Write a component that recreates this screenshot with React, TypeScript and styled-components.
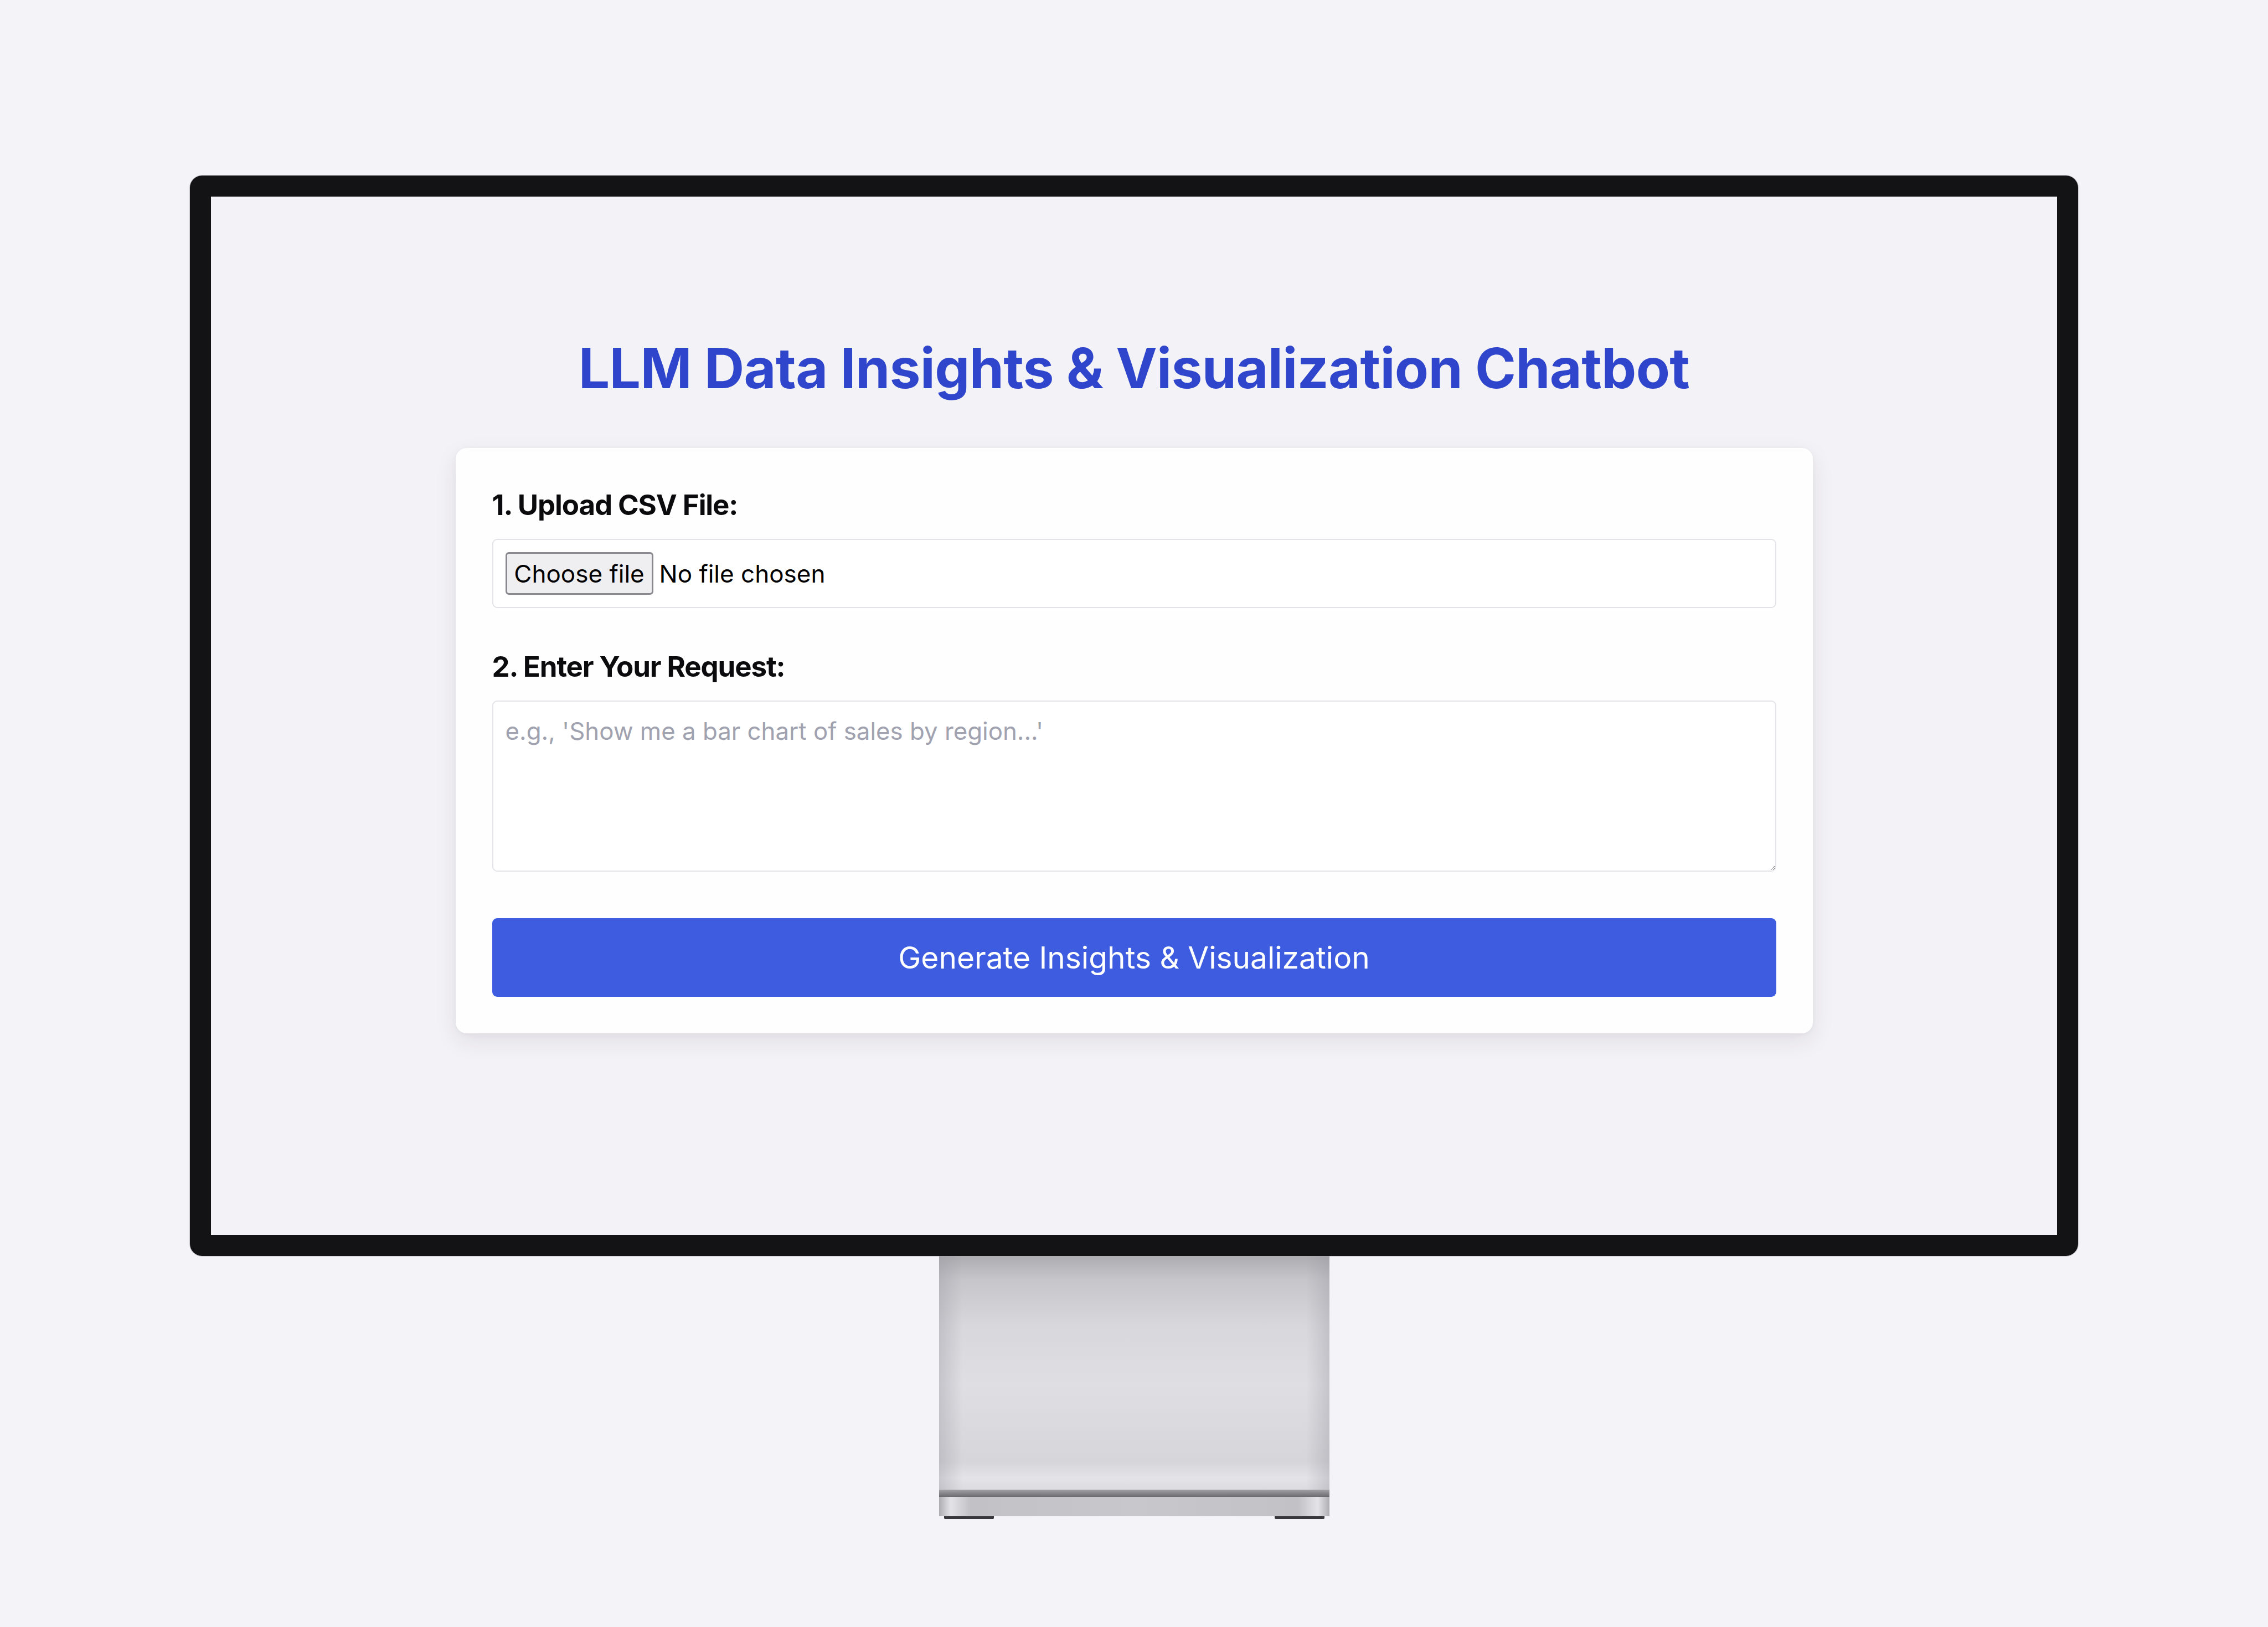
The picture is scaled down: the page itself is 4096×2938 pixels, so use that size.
import React from "react";
import styled, { createGlobalStyle } from "styled-components";

const GlobalStyle = createGlobalStyle`
  * {
    box-sizing: border-box;
  }
  body {
    margin: 0;
    background: #f4f3f7;
    font-family: Inter, "Noto Sans", "Liberation Sans", sans-serif;
  }
`;

const Page = styled.div`
  min-height: 2938px;
  padding-top: 317px;
  display: flex;
  flex-direction: column;
  align-items: center;
`;

const Monitor = styled.div`
  display: flex;
  flex-direction: column;
  align-items: center;
`;

const Bezel = styled.div`
  width: 3410px;
  height: 1951px;
  border: 38px solid #131215;
  border-radius: 22px;
  background: #f3f2f6;
  box-shadow: 0 0 0 1px rgba(120, 118, 128, 0.35);
  overflow: hidden;
`;

const Screen = styled.main`
  height: 100%;
  padding-top: 250px;
  display: flex;
  flex-direction: column;
  align-items: center;
`;

const Title = styled.h1`
  margin: 0 0 84px;
  font-size: 100px;
  line-height: 120px;
  font-weight: 700;
  color: #2f46cc;
  letter-spacing: -0.7px;
`;

const Card = styled.form`
  width: 2451px;
  padding: 66px;
  background: #fefefe;
  border-radius: 20px;
  box-shadow: 0 14px 40px rgba(40, 38, 60, 0.09), 0 2px 8px rgba(40, 38, 60, 0.04);
  display: flex;
  flex-direction: column;
`;

const Field = styled.div<{ $gap?: number }>`
  display: flex;
  flex-direction: column;
  margin-bottom: ${(p) => p.$gap ?? 0}px;
`;

const Label = styled.label`
  display: block;
  margin-bottom: 24px;
  font-size: 51px;
  line-height: 74px;
  font-weight: 700;
  color: #0b0b0d;
  letter-spacing: -1.1px;
`;

const FileBox = styled.label`
  display: flex;
  align-items: center;
  padding: 22px;
  border: 2px solid #e4e3e8;
  border-radius: 9px;
  background: #fff;
  cursor: pointer;

  input {
    display: none;
  }
`;

const FileButton = styled.span`
  display: flex;
  align-items: center;
  justify-content: center;
  width: 267px;
  height: 77px;
  border: 3px solid #8a898f;
  border-radius: 6px;
  background: #efeef1;
  font-size: 44px;
  color: #000;
`;

const FileName = styled.span`
  margin-left: 11px;
  font-size: 44px;
  color: #000;
`;

const Request = styled.textarea`
  width: 100%;
  height: 309px;
  padding: 22px;
  border: 2px solid #e4e3e8;
  border-radius: 9px;
  background: #fff;
  font-family: inherit;
  font-size: 43.8px;
  line-height: 1.45;
  color: #111;
  resize: vertical;
  outline: none;

  &::placeholder {
    color: #a0a2b0;
  }
`;

const SubmitButton = styled.button`
  width: 100%;
  height: 142px;
  border: none;
  border-radius: 9px;
  background: #3d5ce0;
  color: #fff;
  font-family: inherit;
  font-size: 55px;
  font-weight: 400;
  cursor: pointer;
`;

// aluminium stand under the display
const Stand = styled.div`
  width: 705px;
  display: flex;
  flex-direction: column;
`;

const Neck = styled.div`
  height: 422px;
  background:
    linear-gradient(
      90deg,
      rgba(150, 149, 155, 0.35) 0%,
      rgba(150, 149, 155, 0) 6%,
      rgba(150, 149, 155, 0) 94%,
      rgba(150, 149, 155, 0.35) 100%
    ),
    linear-gradient(
      180deg,
      #adacb1 0%,
      #c6c5ca 10%,
      #d8d7dc 30%,
      #dfdee3 55%,
      #d6d5da 88%,
      #e4e3e8 95%,
      #dcdbe0 100%
    );
`;

const Lip = styled.div`
  height: 13px;
  background: linear-gradient(180deg, #a3a2a7 0%, #6b6a6f 100%);
`;

const Base = styled.div`
  height: 35px;
  background: linear-gradient(
    90deg,
    #aeadb2 0%,
    #e4e3e8 3%,
    #c2c1c6 8%,
    #c8c7cc 50%,
    #c2c1c6 92%,
    #e4e3e8 97%,
    #aeadb2 100%
  );
`;

const Feet = styled.div`
  display: flex;
  justify-content: space-between;
  padding: 0 9px;
`;

const Foot = styled.div`
  width: 90px;
  height: 5px;
  background: #38373c;
  border-radius: 0 0 2px 2px;
`;

const App: React.FC = () => {
  return (
    <>
      <GlobalStyle />
      <Page>
        <Monitor>
          <Bezel>
            <Screen>
              <Title>LLM Data Insights &amp; Visualization Chatbot</Title>
              <Card onSubmit={(e) => e.preventDefault()}>
                <Field $gap={69}>
                  <Label htmlFor="csv">1. Upload CSV File:</Label>
                  <FileBox>
                    <input id="csv" type="file" accept=".csv" />
                    <FileButton>Choose file</FileButton>
                    <FileName>No file chosen</FileName>
                  </FileBox>
                </Field>
                <Field $gap={84}>
                  <Label htmlFor="request">2. Enter Your Request:</Label>
                  <Request
                    id="request"
                    placeholder="e.g., 'Show me a bar chart of sales by region...'"
                  />
                </Field>
                <SubmitButton type="submit">Generate Insights &amp; Visualization</SubmitButton>
              </Card>
            </Screen>
          </Bezel>
          <Stand>
            <Neck />
            <Lip />
            <Base />
            <Feet>
              <Foot />
              <Foot />
            </Feet>
          </Stand>
        </Monitor>
      </Page>
    </>
  );
};

export default App;
